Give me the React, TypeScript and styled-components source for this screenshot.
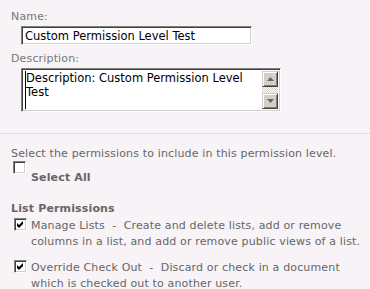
import React from "react";
import styled, { createGlobalStyle } from "styled-components";

const Global = createGlobalStyle`
  html, body { margin: 0; padding: 0; background: #f7f3f7; }
  body { font-family: Verdana, "DejaVu Sans", sans-serif; font-size: 11px; letter-spacing: 0.15px; color: #666; }
`;

const Page = styled.div`
  width: 370px;
  height: 289px;
  overflow: hidden;
  background: #f7f3f7;
`;

const Top = styled.div`
  padding: 10px 0 0 11px;
  height: 133px;
  box-sizing: border-box;
`;

const Label = styled.div`
  color: #777;
  line-height: 14px;
  margin-bottom: 2px;
`;

const Field = styled.div`
  margin: 0 0 7px 10px;
`;

const insetBox = `
  box-sizing: border-box;
  background: #fff;
  border-top: 1px solid #808080;
  border-left: 1px solid #808080;
  border-right: 1px solid #fff;
  border-bottom: 1px solid #fff;
  box-shadow: inset 1px 1px 0 #404040, inset -1px -1px 0 #d4d0c8;
`;

const TextInput = styled.div`
  ${insetBox}
  width: 231px;
  height: 19px;
  padding: 2px 3px;
  font-size: 11.5px;
  letter-spacing: 0;
  line-height: 14px;
  color: #000;
  white-space: nowrap;
`;

const AreaBox = styled.div`
  ${insetBox}
  width: 260px;
  height: 44px;
  display: flex;
  padding: 2px;
`;

const AreaText = styled.div`
  flex: 1;
  font-size: 11.5px;
  letter-spacing: 0;
  line-height: 14px;
  color: #000;
  border-left: 1px solid #000;
  margin-left: 1px;
  padding-right: 4px;
`;

const Scroll = styled.div`
  width: 16px;
  display: flex;
  flex-direction: column;
  background-image: repeating-conic-gradient(#d4d0c8 0 25%, #fff 0 50%);
  background-size: 2px 2px;
`;

const ScrollBtn = styled.div`
  width: 16px;
  height: 16px;
  box-sizing: border-box;
  background: #d4d0c8;
  border-top: 1px solid #d4d0c8;
  border-left: 1px solid #d4d0c8;
  border-right: 1px solid #404040;
  border-bottom: 1px solid #404040;
  box-shadow: inset 1px 1px 0 #fff, inset -1px -1px 0 #808080;
  display: flex;
  align-items: center;
  justify-content: center;
`;

const Track = styled.div`
  flex: 1;
`;

const Divider = styled.div`
  height: 1px;
  background: #e0dce0;
`;

const Bottom = styled.div`
  padding: 13px 0 0 11px;
`;

const Para = styled.div`
  line-height: 14px;
`;

const SelectAllRow = styled.div`
  display: flex;
  align-items: flex-start;
  margin-top: 0;
  height: 25px;
`;

const Box = styled.div<{ $offset?: number }>`
  width: 13px;
  height: 13px;
  box-sizing: border-box;
  background: #fff;
  border-top: 1px solid #808080;
  border-left: 1px solid #808080;
  border-right: 1px solid #fff;
  border-bottom: 1px solid #fff;
  box-shadow: inset 1px 1px 0 #404040, inset -1px -1px 0 #d4d0c8;
  flex: none;
  margin-left: ${(p) => p.$offset ?? 0}px;
  display: flex;
  align-items: center;
  justify-content: center;
`;

const SelectAllText = styled.span`
  font-weight: bold;
  color: #666;
  line-height: 14px;
  margin: 10px 0 0 5px;
`;

const GroupTitle = styled.div`
  font-weight: bold;
  color: #666;
  line-height: 14px;
  margin-top: 16px;
`;

const PermRow = styled.div`
  display: flex;
  align-items: flex-start;
  margin: 2px 0 0 3px;
  & + & { margin-top: 10px; }
`;

const PermText = styled.div`
  margin-left: 4px;
  line-height: 16px;
  width: 336px;
`;

const Check = () => (
  <svg width="7" height="7" viewBox="0 0 7 7">
    <path d="M0 2 L2 4 L6 0 L6 3 L2 7 L0 5 Z" fill="#000" />
  </svg>
);

const Up = () => (
  <svg width="7" height="4" viewBox="0 0 7 4"><path d="M3.5 0 L7 4 L0 4 Z" fill="#666" /></svg>
);
const Down = () => (
  <svg width="7" height="4" viewBox="0 0 7 4"><path d="M0 0 L7 0 L3.5 4 Z" fill="#666" /></svg>
);

export default function App() {
  return (
    <Page>
      <Global />
      <Top>
        <Label>Name:</Label>
        <Field>
          <TextInput>Custom Permission Level Test</TextInput>
        </Field>
        <Label>Description:</Label>
        <Field>
          <AreaBox>
            <AreaText>Description: Custom Permission Level Test</AreaText>
            <Scroll>
              <ScrollBtn><Up /></ScrollBtn>
              <Track />
              <ScrollBtn><Down /></ScrollBtn>
            </Scroll>
          </AreaBox>
        </Field>
      </Top>
      <Divider />
      <Bottom>
        <Para>Select the permissions to include in this permission level.</Para>
        <SelectAllRow>
          <Box $offset={2} />
          <SelectAllText>Select All</SelectAllText>
        </SelectAllRow>
        <GroupTitle>List Permissions</GroupTitle>
        <PermRow>
          <Box><Check /></Box>
          <PermText>Manage Lists &nbsp;- &nbsp;Create and delete lists, add or remove columns in a list, and add or remove public views of a list.</PermText>
        </PermRow>
        <PermRow>
          <Box><Check /></Box>
          <PermText>Override Check Out &nbsp;- &nbsp;Discard or check in a document which is checked out to another user.</PermText>
        </PermRow>
      </Bottom>
    </Page>
  );
}
